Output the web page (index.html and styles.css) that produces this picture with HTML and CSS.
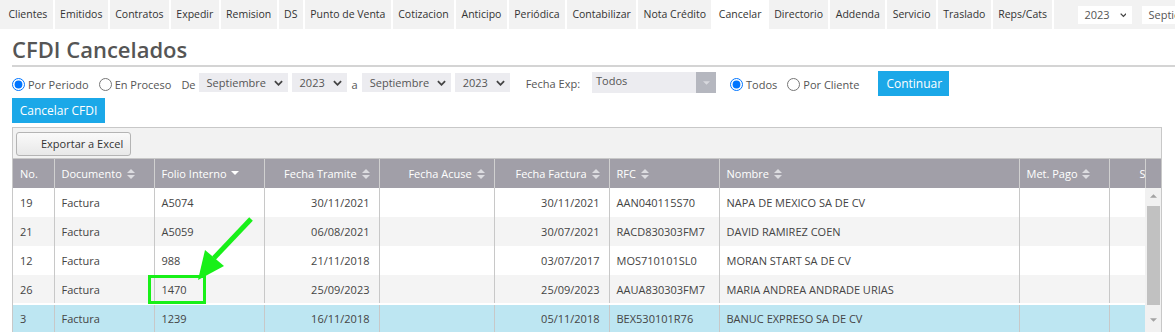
FILE: index.html
```html
<!DOCTYPE html>
<html lang="es">
<head>
  <meta charset="UTF-8" />
  <title>CFDI Cancelados</title>
  <link rel="stylesheet" href="styles.css">
</head>
<body>

  <nav class="tabs">
    <a class="tab">Clientes</a>
    <a class="tab">Emitidos</a>
    <a class="tab">Contratos</a>
    <a class="tab">Expedir</a>
    <a class="tab">Remision</a>
    <a class="tab">DS</a>
    <a class="tab">Punto de Venta</a>
    <a class="tab">Cotizacion</a>
    <a class="tab">Anticipo</a>
    <a class="tab">Periódica</a>
    <a class="tab">Contabilizar</a>
    <a class="tab">Nota Crédito</a>
    <a class="tab active">Cancelar</a>
    <a class="tab">Directorio</a>
    <a class="tab">Addenda</a>
    <a class="tab">Servicio</a>
    <a class="tab">Traslado</a>
    <a class="tab">Reps/Cats</a>
    <div class="nav-selects">
      <span class="nav-select year">2023 <svg class="chev" viewBox="0 0 10 6"><path d="M1 1l4 4 4-4" /></svg></span>
      <span class="nav-select">Septiembre</span>
    </div>
  </nav>

  <h1 class="title">CFDI Cancelados</h1>

  <div class="filters">
    <label class="radio"><input type="radio" name="tipo" checked> Por Periodo</label>
    <label class="radio"><input type="radio" name="tipo"> En Proceso</label>
    <span class="lbl de">De</span>
    <span class="fsel month">Septiembre <svg class="chev" viewBox="0 0 10 6"><path d="M1 1l4 4 4-4" /></svg></span>
    <span class="fsel yr">2023 <svg class="chev" viewBox="0 0 10 6"><path d="M1 1l4 4 4-4" /></svg></span>
    <span class="lbl">a</span>
    <span class="fsel month">Septiembre <svg class="chev" viewBox="0 0 10 6"><path d="M1 1l4 4 4-4" /></svg></span>
    <span class="fsel yr">2023 <svg class="chev" viewBox="0 0 10 6"><path d="M1 1l4 4 4-4" /></svg></span>
    <span class="lbl fecha">Fecha Exp:</span>
    <span class="combo">
      <span class="combo-text">Todos</span>
      <span class="combo-btn"><svg viewBox="0 0 8 4"><path d="M0 0h8L4 4z" /></svg></span>
    </span>
    <label class="radio todos"><input type="radio" name="cli" checked> Todos</label>
    <label class="radio"><input type="radio" name="cli"> Por Cliente</label>
    <button class="btn continuar">Continuar</button>
  </div>

  <button class="btn cancelar">Cancelar CFDI</button>

  <div class="grid-box">
    <div class="toolbar">
      <button class="export">Exportar a Excel</button>
    </div>

    <div class="grid-head">
      <table class="grid">
        <colgroup>
          <col style="width:41px"><col style="width:100px"><col style="width:110px"><col style="width:115px"><col style="width:115px">
          <col style="width:115px"><col style="width:110px"><col style="width:300px"><col style="width:90px"><col style="width:36px">
        </colgroup>
        <tr>
          <th>No.</th>
          <th>Documento <svg class="sort" viewBox="0 0 8 10"><path d="M0 4L4 0l4 4zM0 6h8l-4 4z" /></svg></th>
          <th>Folio Interno <svg class="sort down" viewBox="0 0 8 10"><path d="M0 2h8L4 6z" /></svg></th>
          <th class="r">Fecha Tramite <svg class="sort" viewBox="0 0 8 10"><path d="M0 4L4 0l4 4zM0 6h8l-4 4z" /></svg></th>
          <th class="r">Fecha Acuse <svg class="sort" viewBox="0 0 8 10"><path d="M0 4L4 0l4 4zM0 6h8l-4 4z" /></svg></th>
          <th class="r">Fecha Factura <svg class="sort" viewBox="0 0 8 10"><path d="M0 4L4 0l4 4zM0 6h8l-4 4z" /></svg></th>
          <th>RFC <svg class="sort" viewBox="0 0 8 10"><path d="M0 4L4 0l4 4zM0 6h8l-4 4z" /></svg></th>
          <th>Nombre <svg class="sort" viewBox="0 0 8 10"><path d="M0 4L4 0l4 4zM0 6h8l-4 4z" /></svg></th>
          <th>Met. Pago <svg class="sort" viewBox="0 0 8 10"><path d="M0 4L4 0l4 4zM0 6h8l-4 4z" /></svg></th>
          <th class="clip">Serie</th>
        </tr>
      </table>
      <div class="head-fill"></div>
    </div>

    <div class="grid-body">
      <table class="grid">
        <colgroup>
          <col style="width:41px"><col style="width:100px"><col style="width:110px"><col style="width:115px"><col style="width:115px">
          <col style="width:115px"><col style="width:110px"><col style="width:300px"><col style="width:90px"><col style="width:36px">
        </colgroup>
        <tr>
          <td>19</td><td>Factura</td><td>A5074</td><td class="r">30/11/2021</td><td></td>
          <td class="r">30/11/2021</td><td>AAN040115S70</td><td>NAPA DE MEXICO SA DE CV</td><td></td><td></td>
        </tr>
        <tr class="alt">
          <td>21</td><td>Factura</td><td>A5059</td><td class="r">06/08/2021</td><td></td>
          <td class="r">30/07/2021</td><td>RACD830303FM7</td><td>DAVID RAMIREZ COEN</td><td></td><td></td>
        </tr>
        <tr>
          <td>12</td><td>Factura</td><td>988</td><td class="r">21/11/2018</td><td></td>
          <td class="r">03/07/2017</td><td>MOS710101SL0</td><td>MORAN START SA DE CV</td><td></td><td></td>
        </tr>
        <tr class="alt">
          <td>26</td><td>Factura</td><td>1470</td><td class="r">25/09/2023</td><td></td>
          <td class="r">25/09/2023</td><td>AAUA830303FM7</td><td>MARIA ANDREA ANDRADE URIAS</td><td></td><td></td>
        </tr>
        <tr class="sel">
          <td>3</td><td>Factura</td><td>1239</td><td class="r">16/11/2018</td><td></td>
          <td class="r">05/11/2018</td><td>BEX530101R76</td><td>BANUC EXPRESO SA DE CV</td><td></td><td></td>
        </tr>
      </table>
      <div class="scrollbar">
        <svg class="sb-arrow" viewBox="0 0 8 4"><path d="M0 4L4 0l4 4z" /></svg>
        <div class="sb-thumb"></div>
        <svg class="sb-arrow" viewBox="0 0 8 4"><path d="M0 0h8L4 4z" /></svg>
      </div>
    </div>
  </div>

  <svg class="annotation" width="1175" height="332" viewBox="0 0 1175 332">
    <rect x="149.5" y="276.5" width="55" height="26" fill="none" stroke="#18f018" stroke-width="3" />
    <line x1="251" y1="219" x2="214" y2="258" stroke="#18f018" stroke-width="5" />
    <polygon points="198,280 205,250 224,266" fill="#18f018" />
  </svg>

</body>
</html>
```

FILE: styles.css
```css
* {
  box-sizing: border-box;
}

body {
  margin: 0;
  position: relative;
  font-family: 'Open Sans', sans-serif;
  color: #444;
  background: #fff;
  overflow: hidden;
  height: 332px;
}

/* top menu */
.tabs {
  display: flex;
  align-items: stretch;
  height: 29px;
  background: #f2f2f2;
  padding-left: 3px;
  white-space: nowrap;
  overflow: hidden;
}

.tab {
  font-size: 10.5px;
  line-height: 29px;
  padding: 0 5.4px;
  color: #333;
  border-right: 2px solid #fff;
}

.tab.active {
  background: #fff;
}

.nav-selects {
  display: flex;
  align-items: center;
  gap: 10px;
  margin-left: 24px;
}

.nav-select {
  display: flex;
  align-items: center;
  gap: 10px;
  height: 18px;
  background: #fff;
  padding: 0 6px;
  font-size: 11px;
  color: #555;
}

.nav-select.year {
  width: 54px;
}

.chev {
  width: 9px;
  height: 6px;
  fill: none;
  stroke: #444;
  stroke-width: 2;
}

.title {
  margin: 0 0 0 12px;
  padding: 5px 0 1px;
  font-size: 22px;
  font-weight: 600;
  line-height: 30px;
  color: #555;
  border-bottom: 2px solid #d4d4d4;
}

/* filters */
.filters {
  display: flex;
  align-items: center;
  height: 25px;
  margin: 4px 0 0 12px;
  font-size: 11px;
  color: #555;
}

.radio {
  display: flex;
  align-items: center;
  gap: 3px;
  margin-right: 10px;
  margin-top: 2px;
}

.radio input {
  margin: 0;
  width: 13px;
  height: 13px;
}

.lbl {
  margin: 2px 4px 0 1px;
}

.lbl.de {
  margin-left: 0;
  margin-right: 3px;
}

.lbl.fecha {
  margin: 0 12px 0 12px;
}

.fsel {
  display: flex;
  align-items: center;
  justify-content: space-between;
  height: 19px;
  margin: 0 4px 2px 0;
  padding: 0 5px 0 8px;
  background: #ececf0;
  color: #555;
}

.fsel.month {
  width: 89px;
}

.fsel.yr {
  width: 55px;
}

.combo {
  display: flex;
  width: 124px;
  height: 21px;
  margin-bottom: 2px;
  background: #ececf0;
}

.combo-text {
  flex: 1;
  padding: 1px 0 0 4px;
  color: #555;
}

.combo-btn {
  display: flex;
  align-items: center;
  justify-content: center;
  width: 20px;
  background: #b5b7bf;
}

.combo-btn svg {
  width: 7px;
  height: 4px;
  fill: #d8d9de;
}

.radio.todos {
  margin-left: 14px;
}

.btn {
  border: none;
  background: #1ba8e8;
  color: #fff;
  font-family: 'Open Sans', sans-serif;
  font-size: 12px;
  height: 25px;
  padding: 0 8px;
}

.btn.continuar {
  margin-left: 9px;
  width: 71px;
}

.btn.cancelar {
  display: block;
  margin: 2px 0 0 12px;
  width: 93px;
  padding: 0;
}

/* grid */
.grid-box {
  width: 1150px;
  margin: 4px 0 0 12px;
  border: 1px solid #c8c8c8;
  border-bottom: none;
}

.toolbar {
  height: 31px;
  background: #f2f2f2;
  padding: 3px 0 0 3px;
  border-bottom: 1px solid #c8c8c8;
}

.export {
  width: 115px;
  height: 24px;
  border: 1px solid #b4b4b4;
  border-radius: 3px;
  background: linear-gradient(#fafafa, #e8e8e8);
  font-family: 'Open Sans', sans-serif;
  font-size: 11px;
  color: #333;
  padding: 0 0 0 24px;
  text-align: left;
}

.grid-head,
.grid-body {
  display: flex;
}

.grid {
  width: 1132px;
  border-collapse: collapse;
  table-layout: fixed;
  font-size: 11px;
}

.grid th {
  height: 29px;
  background: #a19fa8;
  color: #fff;
  font-weight: 400;
  text-align: left;
  padding: 0 7px;
  border-left: 1px solid #d0d0d0;
  white-space: nowrap;
  overflow: hidden;
}

.grid th:first-child,
.grid td:first-child {
  border-left: none;
}

.grid th.r,
.grid td.r {
  text-align: right;
  padding-right: 9px;
}

.grid th.clip {
  padding: 0;
  text-indent: 30px;
}

.sort {
  width: 8px;
  height: 10px;
  margin-left: 2px;
  vertical-align: -1px;
  fill: #dcdce0;
}

.sort.down {
  fill: #fff;
}

.head-fill {
  width: 17px;
  background: #a19fa8;
  border-left: 1px solid #d0d0d0;
}

.grid td {
  height: 29px;
  padding: 0 7px;
  color: #444;
  border-left: 1px solid #c8c8c8;
  white-space: nowrap;
  overflow: hidden;
}

.grid tr.alt td {
  background: #f4f4f4;
}

.grid tr.sel td {
  background: #bde6f2;
  border-top: 2px solid #fff;
  height: 28px;
}

.scrollbar {
  width: 17px;
  background: #f1f1f1;
  display: flex;
  flex-direction: column;
  align-items: center;
  padding: 6px 0;
}

.sb-arrow {
  width: 7px;
  height: 4px;
  fill: #a3a3a3;
}

.sb-thumb {
  width: 13px;
  height: 99px;
  margin: 8px 0 13px;
  background: #c1c1c1;
}

.annotation {
  position: absolute;
  top: 0;
  left: 0;
  pointer-events: none;
}
```
